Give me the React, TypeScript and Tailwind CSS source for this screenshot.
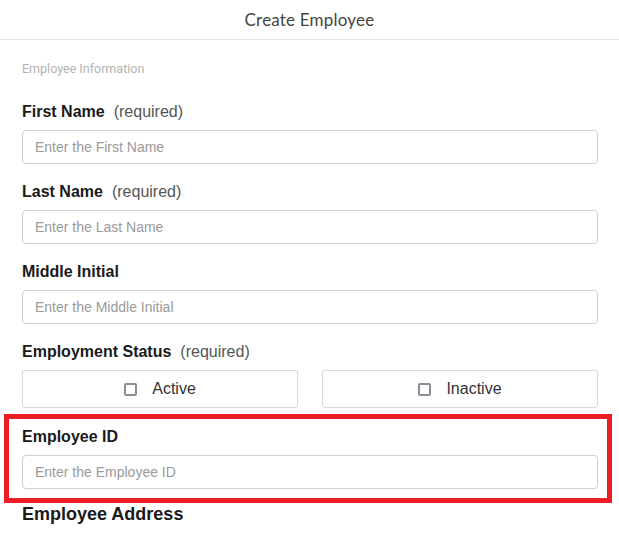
const fieldInput =
    "block w-full h-[34px] rounded-[4px] border border-[#cfcfcf] bg-white px-3 text-[14px] text-[#333] placeholder:text-[#9a9a9a] outline-none";

function Label({ text, required }: { text: string; required?: boolean }) {
    return (
        <div className="h-[20px] leading-[20px] text-[16px] text-[#1a1a1a] mb-[8px]">
            <span className="font-bold">{text}</span>
            {required && <span className="ml-[9px] text-[#555]">(required)</span>}
        </div>
    );
}

function TextField({
    label,
    placeholder,
    required,
}: {
    label: string;
    placeholder: string;
    required?: boolean;
}) {
    return (
        <div className="mb-[18px]">
            <Label text={label} required={required} />
            <input className={fieldInput} placeholder={placeholder} />
        </div>
    );
}

function StatusOption({ text }: { text: string }) {
    return (
        <button className="flex h-[38px] items-center justify-center gap-[15px] rounded-[3px] border border-[#d9d9d9] bg-white text-[16px] text-[#333]">
            <span className="block h-[13px] w-[13px] rounded-[2px] border-2 border-[#8c8c98]" />
            {text}
        </button>
    );
}

export default function App() {
    return (
        <div className="min-h-screen bg-white font-['Liberation_Sans',Arial,sans-serif]">
            <header className="flex h-[40px] items-center justify-center border-b border-[#e6e6e6]">
                <h1 className="font-['Lato',sans-serif] text-[17px] text-[#444] tracking-[0.2px]">
                    Create Employee
                </h1>
            </header>

            <form className="pl-[22px] pr-[21px]">
                <p className="mt-[21px] mb-[25px] h-[16px] leading-[16px] font-['Roboto',sans-serif] text-[12.5px] text-[#b3b3b3]">
                    Employee Information
                </p>

                <TextField label="First Name" placeholder="Enter the First Name" required />
                <TextField label="Last Name" placeholder="Enter the Last Name" required />
                <TextField label="Middle Initial" placeholder="Enter the Middle Initial" />

                <Label text="Employment Status" required />
                <div className="grid grid-cols-2 gap-[24px]">
                    <StatusOption text="Active" />
                    <StatusOption text="Inactive" />
                </div>

                <div className="mt-[6px] -ml-[18px] -mr-[14px] border-[5px] border-[#ee1c25] pl-[13px] pr-[9px] pt-[8px] pb-[9px]">
                    <Label text="Employee ID" />
                    <input className={fieldInput + " h-[33px]"} placeholder="Enter the Employee ID" />
                </div>

                <h2 className="mt-[1px] h-[20px] leading-[20px] text-[18px] font-bold text-[#1a1a1a]">
                    Employee Address
                </h2>
            </form>
        </div>
    );
}
